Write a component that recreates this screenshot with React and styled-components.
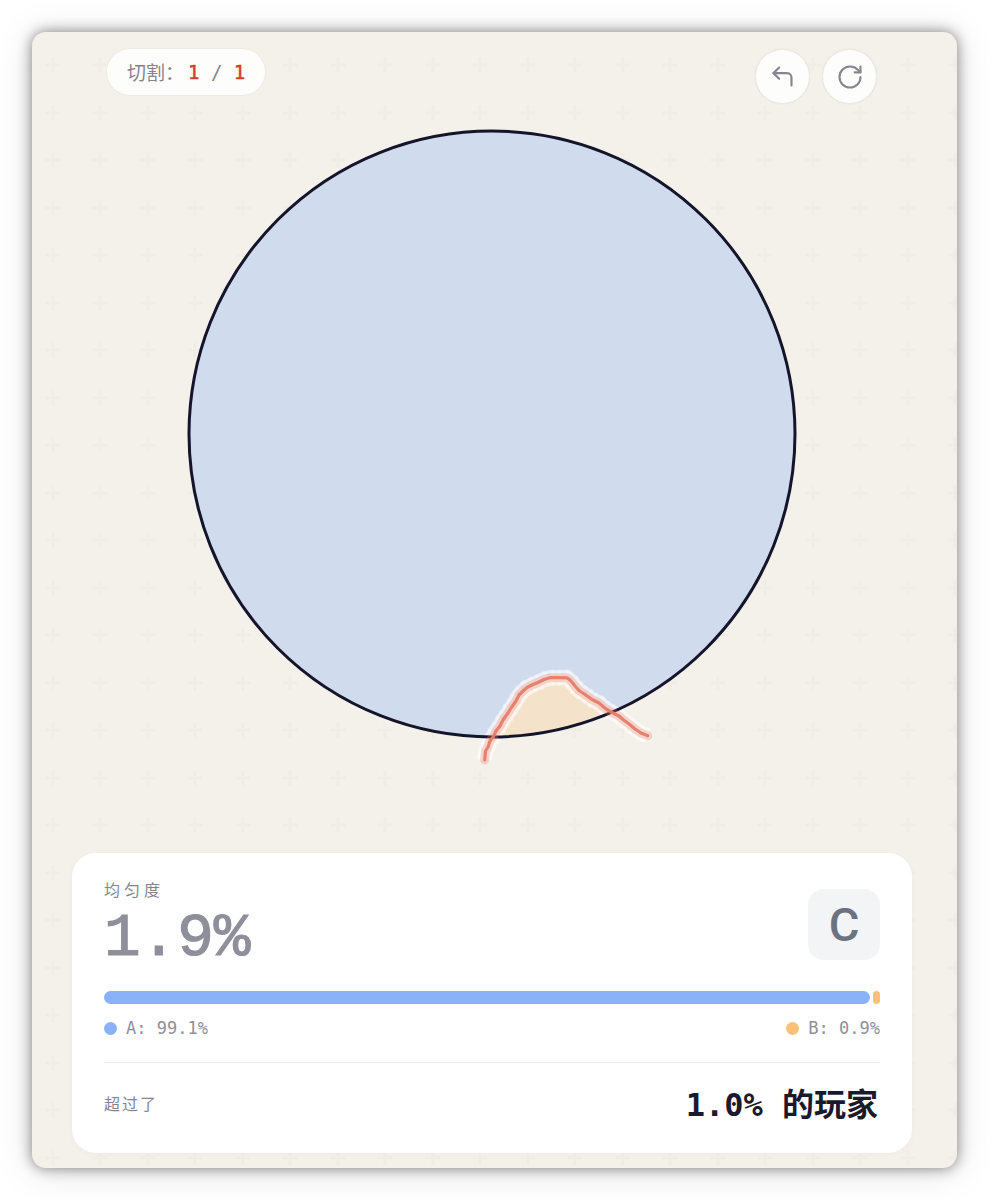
import React from "react";
import styled, { createGlobalStyle } from "styled-components";
import { CornerUpLeft, RotateCw } from "lucide-react";

const MONO = `"DejaVu Sans Mono", "Noto Sans CJK SC", monospace`;
const SANS = `"Noto Sans CJK SC", "Noto Sans", sans-serif`;

const plus = encodeURIComponent(
  `<svg xmlns="http://www.w3.org/2000/svg" width="47.5" height="47.5"><path d="M23.75 16v15.5M16 23.75h15.5" stroke="#e9e6dd" stroke-opacity=".3" stroke-width="3" fill="none"/></svg>`
);

const GlobalStyle = createGlobalStyle`
  html, body {
    margin: 0;
    background: #fff;
  }
`;

const Page = styled.div`
  padding: 32px;
  width: 925px;
  height: 1136px;
`;

const Card = styled.main`
  height: 100%;
  display: flex;
  flex-direction: column;
  border-radius: 14px;
  background-color: #f4f1eb;
  background-image: url("data:image/svg+xml,${plus}");
  background-size: 47.5px 47.5px;
  background-position: -3px 9.5px;
  box-shadow: 0 0 14px rgba(0, 0, 0, 0.48), 0 3px 40px rgba(0, 0, 0, 0.12);
`;

const Toolbar = styled.div`
  display: flex;
  justify-content: space-between;
  align-items: flex-start;
  padding: 17px 80px 0 75px;
`;

const Counter = styled.div`
  box-sizing: border-box;
  height: 46px;
  padding: 0 20px 1px;
  display: flex;
  align-items: center;
  border-radius: 23px;
  background: #fdfdfc;
  box-shadow: 0 0 0 1px rgba(235, 232, 225, 0.7);
  font-family: ${SANS};
  font-size: 19px;
  color: #84848e;
  white-space: pre;
`;

const CounterNums = styled.span`
  margin-left: 4px;
  font-family: ${MONO};
  font-size: 19px;
`;

const CounterHit = styled.span`
  color: #d1402e;
  -webkit-text-stroke: 0.5px #d1402e;
`;

const Actions = styled.div`
  display: flex;
  gap: 12px;
`;

const RoundButton = styled.button`
  box-sizing: border-box;
  width: 55px;
  height: 55px;
  padding: 0;
  display: flex;
  align-items: center;
  justify-content: center;
  border: 1px solid #e9e7e1;
  border-radius: 50%;
  background: #fdfdfc;
  box-shadow: 0 0 0 1px rgba(235, 232, 225, 0.45);
  color: #85858f;
`;

const Board = styled.svg`
  display: block;
  width: 925px;
  height: 749px;
  flex: none;
`;

const Panel = styled.section`
  box-sizing: border-box;
  margin: 0 45px 0 40px;
  height: 300px;
  padding: 25px 32px 0;
  border-radius: 24px;
  background: #fff;
  box-shadow: 0 1px 6px rgba(0, 0, 0, 0.03);
`;

const ScoreRow = styled.div`
  display: flex;
  justify-content: space-between;
  align-items: flex-start;
  height: 113px;
`;

const ScoreLabel = styled.div`
  font-family: ${SANS};
  font-size: 16px;
  line-height: 22px;
  letter-spacing: 4px;
  color: #84848e;
`;

const ScoreValue = styled.div`
  font-family: "Liberation Mono", monospace;
  font-size: 61px;
  line-height: 78px;
  color: #8f8f9b;
  -webkit-text-stroke: 1.2px #8f8f9b;
`;

const Grade = styled.div`
  width: 72px;
  height: 71px;
  margin-top: 11px;
  display: flex;
  align-items: center;
  justify-content: center;
  border-radius: 16px;
  background: #f3f4f6;
  font-family: Roboto, sans-serif;
  font-size: 47px;
  font-weight: 500;
  color: #6b7280;
`;

const Bar = styled.div`
  display: flex;
  gap: 3px;
  height: 13px;
`;

const BarPart = styled.div`
  height: 100%;
  border-radius: 7px;
  background: ${(p) => p.$color};
`;

const Legend = styled.div`
  display: flex;
  justify-content: space-between;
  margin-top: 13px;
  height: 22px;
`;

const LegendItem = styled.div`
  display: flex;
  align-items: center;
  gap: 9px;
  font-family: ${MONO};
  font-size: 17px;
  color: #8f8f9b;
`;

const Dot = styled.span`
  width: 13px;
  height: 13px;
  border-radius: 50%;
  background: ${(p) => p.$color};
`;

const Footer = styled.div`
  margin-top: 23px;
  padding-top: 17px;
  display: flex;
  justify-content: space-between;
  align-items: center;
  border-top: 1px solid #ececec;
`;

const FooterLabel = styled.div`
  margin-top: -4px;
  font-family: ${SANS};
  font-size: 16px;
  letter-spacing: 2px;
  color: #84848e;
`;

const FooterValue = styled.div`
  padding-right: 2px;
  font-family: ${MONO};
  font-size: 32px;
  line-height: 50px;
  font-weight: 700;
  color: #1a1a2e;
`;

const cutLine =
  "M484.7 760 L485.5 751 L488 747 L490 741 L493.5 736.5 L496 731 L500 726 L503 720 L508 713 L511 708 L516 701 L519 695 L523 691 L527 687.5 L533 684.5 L538 682.5 L544 679.5 L550 677.7 L558 677.7 L567 677.8 L571 681 L575 686 L579 690.5 L585 694.5 L592 699.5 L599 703 L606 709 L613 713 L619 716 L623 719.5 L629 724 L635 729 L641 733 L647.7 735.7";

const sliceArea =
  "M493.5 736.5 L500 726 L508 713 L516 701 L523 691 L533 684.5 L550 677.7 L567 677.8 L579 690.5 L592 699.5 L606 709 L640 735 L640 780 L490 780 Z";

const App = () => {
  const shareA = 99.1;
  const shareB = 0.9;

  return (
    <Page>
      <GlobalStyle />
      <Card>
        <Toolbar>
          <Counter>
            切割：
            <CounterNums>
              <CounterHit>1</CounterHit> / <CounterHit>1</CounterHit>
            </CounterNums>
          </Counter>
          <Actions>
            <RoundButton aria-label="undo">
              <CornerUpLeft size={27} strokeWidth={1.9} />
            </RoundButton>
            <RoundButton aria-label="redo">
              <RotateCw size={28} strokeWidth={1.8} />
            </RoundButton>
          </Actions>
        </Toolbar>

        <Board viewBox="32 104 925 749">
          <defs>
            <clipPath id="disc">
              <circle cx="492" cy="434" r="303" />
            </clipPath>
          </defs>
          <circle cx="492" cy="434" r="303" fill="#d0dbed" />
          <path d={sliceArea} fill="#f5e2ca" clipPath="url(#disc)" />
          {/* pale halo along the cut, dashed so its edge looks rough */}
          <path
            d={cutLine}
            fill="none"
            stroke="#fff"
            strokeOpacity="0.62"
            strokeWidth="15"
            strokeLinejoin="round"
          />
          <path
            d={cutLine}
            fill="none"
            stroke="#fff"
            strokeOpacity="0.3"
            strokeWidth="17"
            strokeDasharray="3 4"
            clipPath="url(#disc)"
          />
          <circle cx="492" cy="434" r="303" fill="none" stroke="#14142b" strokeWidth="3" />
          <path
            d={cutLine}
            fill="none"
            stroke="#e8806c"
            strokeOpacity="0.3"
            strokeWidth="9"
            strokeLinejoin="round"
            strokeLinecap="round"
          />
          <path
            d={cutLine}
            fill="none"
            stroke="#e67c68"
            strokeOpacity="0.95"
            strokeWidth="3.2"
            strokeLinejoin="round"
            strokeLinecap="round"
          />
        </Board>

        <Panel>
          <ScoreRow>
            <div>
              <ScoreLabel>均匀度</ScoreLabel>
              <ScoreValue>1.9%</ScoreValue>
            </div>
            <Grade>C</Grade>
          </ScoreRow>
          <Bar>
            <BarPart $color="#8ab2f8" style={{ flex: shareA }} />
            <BarPart $color="#fdc07a" style={{ flex: shareB }} />
          </Bar>
          <Legend>
            <LegendItem>
              <Dot $color="#8ab2f8" />
              A: 99.1%
            </LegendItem>
            <LegendItem>
              <Dot $color="#fdc07a" />
              B: 0.9%
            </LegendItem>
          </Legend>
          <Footer>
            <FooterLabel>超过了</FooterLabel>
            <FooterValue>1.0% 的玩家</FooterValue>
          </Footer>
        </Panel>
      </Card>
    </Page>
  );
};

export default App;
